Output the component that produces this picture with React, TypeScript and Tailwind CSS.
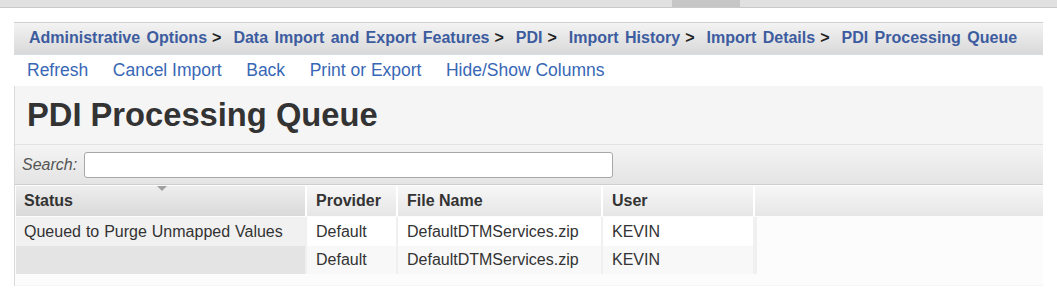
import React from 'react';

const crumbs = ['Administrative Options', 'Data Import and Export Features', 'PDI', 'Import History', 'Import Details'];
const actions = ['Refresh', 'Cancel Import', 'Back', 'Print or Export', 'Hide/Show Columns'];

const rows = [
  { status: 'Queued to Purge Unmapped Values', provider: 'Default', file: 'DefaultDTMServices.zip', user: 'KEVIN' },
  { status: '', provider: 'Default', file: 'DefaultDTMServices.zip', user: 'KEVIN' },
];

export default function App() {
  return (
    <div className="w-[1057px] h-[288px] overflow-hidden bg-white font-['Liberation_Sans',Arial,sans-serif]">
      {/* top strip */}
      <div className="h-[8px] bg-[#e1e1e1] border-b border-[#c9c9c9] flex">
        <div className="ml-[672px] w-[68px] bg-[#c6c6c6]" />
      </div>

      <div className="ml-[14px] w-[1029px] mt-[14px]">
        {/* breadcrumb */}
        <div className="h-[33px] border-t border-[#d0d0d0] border-b border-b-[#d3dde6] bg-gradient-to-b from-[#f3f3f3] to-[#d9d9d9] flex items-center pl-[15px] pb-[1px] text-[16px] font-bold text-[#3d5c9f]">
          {crumbs.map((c) => (
            <span key={c} className="mr-[12px] whitespace-nowrap flex">
              <span className="[word-spacing:2px]">{c}</span>
              <span className="ml-[5px] text-[#222]">&gt;</span>
            </span>
          ))}
          <span className="whitespace-nowrap [word-spacing:2px]">PDI Processing Queue</span>
        </div>

        {/* actions */}
        <div className="h-[31px] bg-white rounded-bl-[6px] flex items-center gap-[24.5px] pl-[13px] text-[17.5px] text-[#3867b6]">
          {actions.map((a) => (
            <span key={a} className="whitespace-nowrap">{a}</span>
          ))}
        </div>

        {/* panel */}
        <div className="bg-[#f5f5f5] border-l border-[#dadada] h-[200px]">
          <h1 className="h-[58px] flex items-center pl-[12px] text-[32.7px] font-bold text-[#333] pb-[1px]">
            PDI Processing Queue
          </h1>

          <div className="h-[41px] bg-gradient-to-b from-[#f4f4f4] to-[#e4e4e4] border-t border-[#e2e2e2] border-b border-b-[#cfcfcf] flex items-center pl-[7px]">
            <span className="italic text-[16px] text-[#555] mr-[7px]">Search:</span>
            <div className="w-[529px] h-[26px] bg-white border border-[#a8a8a8] rounded-[3px]" />
          </div>

          <div className="bg-[#fcfcfc] h-[100px] pt-[1px] pl-[1px]">
            {/* header */}
            <div className="flex h-[30px] gap-[2px] bg-white text-[16px] font-bold text-[#333]">
              <div className="relative w-[289px] pl-[8px] flex items-center bg-gradient-to-b from-[#eeeeee] to-[#d9d9d9]">
                Status
                <span className="absolute left-[141px] top-0 w-0 h-0 border-l-[5px] border-r-[5px] border-t-[5px] border-l-transparent border-r-transparent border-t-[#a0a0a0]" />
              </div>
              <div className="w-[89px] pl-[9px] flex items-center bg-gradient-to-b from-[#f7f7f7] to-[#e6e6e6]">Provider</div>
              <div className="w-[203px] pl-[9px] flex items-center bg-gradient-to-b from-[#f7f7f7] to-[#e6e6e6]">File Name</div>
              <div className="w-[150px] pl-[9px] flex items-center bg-gradient-to-b from-[#f7f7f7] to-[#e6e6e6]">User</div>
              <div className="flex-1 bg-gradient-to-b from-[#f7f7f7] to-[#e6e6e6]" />
            </div>

            {/* rows */}
            {rows.map((r, i) => (
              <div key={i} className={`flex gap-[2px] w-[741px] text-[16px] text-[#333] [word-spacing:0.5px] ${i === 0 ? 'h-[29px] mt-[1px]' : 'h-[28px]'} bg-[#f0f0f0]`}>
                <div className={`w-[289px] pl-[8px] flex items-center ${i === 0 ? 'bg-[#f1f1f1]' : 'bg-[#e4e4e4]'}`}>{r.status}</div>
                <div className={`w-[89px] pl-[9px] flex items-center ${i === 0 ? 'bg-white' : 'bg-[#f8f8f8]'}`}>{r.provider}</div>
                <div className={`w-[203px] pl-[9px] flex items-center ${i === 0 ? 'bg-white' : 'bg-[#f8f8f8]'}`}>{r.file}</div>
                <div className={`w-[150px] pl-[9px] flex items-center ${i === 0 ? 'bg-white' : 'bg-[#f8f8f8]'}`}>{r.user}</div>
              </div>
            ))}
          </div>
        </div>
      </div>
    </div>
  );
}
